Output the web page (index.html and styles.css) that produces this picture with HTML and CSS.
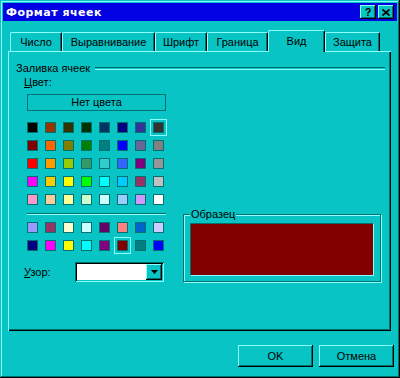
FILE: index.html
```html
<!DOCTYPE html>
<html lang="ru">

<head>
  <meta charset="UTF-8" />
  <title>Формат ячеек</title>
  <link rel="stylesheet" href="styles.css">
</head>

<body>

  <div class="window">

    <!-- заголовок -->
    <div class="titlebar">
      <span class="title">Формат ячеек</span>
      <div class="caption-buttons">
        <span class="cap-btn">?</span>
        <span class="cap-btn">
          <svg width="8" height="7" viewBox="0 0 8 7">
            <path d="M0.5 0.5 L7.5 6.5 M7.5 0.5 L0.5 6.5" stroke="#000" stroke-width="1.8" fill="none" />
          </svg>
        </span>
      </div>
    </div>

    <!-- вкладки -->
    <div class="tabs">
      <div class="tab tab-number">Число</div>
      <div class="tab tab-align">Выравнивание</div>
      <div class="tab tab-font">Шрифт</div>
      <div class="tab tab-border">Граница</div>
      <div class="tab tab-view active">Вид</div>
      <div class="tab tab-protect">Защита</div>
    </div>

    <div class="panel">
      <div class="group-head">
        <span>Заливка ячеек</span>
        <span class="etched-line"></span>
      </div>

      <div class="panel-body">
        <div class="left-col">
          <div class="label"><u>Ц</u>вет:</div>
          <div class="no-color">Нет цвета</div>

          <div class="palette" id="palette-main"></div>
          <div class="separator"></div>
          <div class="palette" id="palette-extra"></div>

          <div class="pattern-row">
            <span class="pattern-label"><u>У</u>зор:</span>
            <div class="combo">
              <div class="combo-field"></div>
              <div class="combo-btn">
                <svg width="7" height="4" viewBox="0 0 7 4">
                  <polygon points="0,0 7,0 3.5,4" fill="#000" />
                </svg>
              </div>
            </div>
          </div>
        </div>

        <fieldset class="sample">
          <legend>Образец</legend>
          <div class="sample-box"></div>
        </fieldset>
      </div>
    </div>

    <div class="footer">
      <button class="btn">OK</button>
      <button class="btn">Отмена</button>
    </div>
  </div>

  <script>
    const основные = [
      '#000000', '#993300', '#333300', '#003300', '#003366', '#000080', '#333399', '#333333',
      '#800000', '#ff6600', '#808000', '#008000', '#008080', '#0000ff', '#666699', '#808080',
      '#ff0000', '#ff9900', '#99cc00', '#339966', '#33cccc', '#3366ff', '#800080', '#969696',
      '#ff00ff', '#ffcc00', '#ffff00', '#00ff00', '#00ffff', '#00ccff', '#993366', '#c0c0c0',
      '#ff99cc', '#ffcc99', '#ffff99', '#ccffcc', '#ccffff', '#99ccff', '#cc99ff', '#ffffff'
    ];
    const дополнительные = [
      '#9999ff', '#993366', '#ffffcc', '#ccffff', '#660066', '#ff8080', '#0066cc', '#ccccff',
      '#000080', '#ff00ff', '#ffff00', '#00ffff', '#800080', '#800000', '#008080', '#0000ff'
    ];

    function llenar(id, colores, elegido) {
      const cont = document.getElementById(id);
      colores.forEach((c, i) => {
        const div = document.createElement('div');
        div.className = 'swatch' + (i === elegido ? ' selected' : '');
        div.style.background = c;
        cont.appendChild(div);
      });
    }

    llenar('palette-main', основные, 7);
    llenar('palette-extra', дополнительные, 13);
  </script>
</body>

</html>
```

FILE: styles.css
```css
:root {
  --face: #08c4c4;
  --light: #8cffff;
  --dark: #037070;
}

html,
body {
  margin: 0;
  padding: 0;
  overflow: hidden;
}

body {
  font-family: "Liberation Sans", Arial, sans-serif;
  font-size: 11px;
  color: #000;
  background: var(--face);
}

.window {
  width: 400px;
  height: 378px;
  box-sizing: border-box;
  padding: 3px;
  background: var(--face);
  box-shadow:
    inset -1px -1px 0 #000,
    inset 1px 1px 0 var(--face),
    inset -2px -2px 0 var(--dark),
    inset 2px 2px 0 var(--light);
}

/* заголовок */

.titlebar {
  height: 18px;
  background: #0202e2;
  display: flex;
  align-items: center;
  justify-content: space-between;
  padding: 0 3px 0 3px;
}

.title {
  color: #fff;
  font-family: "DejaVu Sans", Verdana, sans-serif;
  font-weight: bold;
  font-size: 11px;
  letter-spacing: 0.5px;
}

.caption-buttons {
  display: flex;
  gap: 2px;
}

.cap-btn {
  width: 16px;
  height: 14px;
  box-sizing: border-box;
  display: flex;
  align-items: center;
  justify-content: center;
  background: var(--face);
  font-weight: bold;
  font-size: 11px;
  box-shadow:
    inset -1px -1px 0 #000,
    inset 1px 1px 0 var(--light),
    inset -2px -2px 0 var(--dark);
}

/* вкладки */

.tabs {
  display: flex;
  align-items: flex-end;
  margin: 9px 0 0 5px;
  padding-left: 2px;
  height: 21px;
  position: relative;
  z-index: 1;
}

.tab {
  height: 19px;
  box-sizing: border-box;
  padding-top: 3px;
  text-align: center;
  border-top: 1px solid var(--light);
  border-left: 1px solid var(--light);
  border-right: 1px solid #000;
  border-radius: 2px 2px 0 0;
  box-shadow: inset -1px 0 0 var(--dark);
  background: var(--face);
}

.tab.active {
  height: 22px;
  margin-bottom: -1px;
  padding-top: 4px;
}

.tab-number { width: 52px; }
.tab-align { width: 93px; }
.tab-font { width: 52px; }
.tab-border { width: 61px; }
.tab-view { width: 57px; }
.tab-protect { width: 55px; }

/* панель */

.panel {
  margin-left: 5px;
  width: 383px;
  height: 280px;
  box-sizing: border-box;
  padding: 10px 6px 0 8px;
  box-shadow:
    inset 1px 1px 0 var(--light),
    inset -1px -1px 0 #000,
    inset -2px -2px 0 var(--dark);
}

.group-head {
  display: flex;
  align-items: center;
  gap: 5px;
  height: 13px;
}

.etched-line {
  flex: 1;
  height: 1px;
  border-top: 1px solid var(--dark);
  border-bottom: 1px solid var(--light);
  margin-top: 1px;
}

.panel-body {
  display: flex;
  align-items: flex-end;
  padding-left: 8px;
  margin-top: 2px;
}

.left-col {
  width: 142px;
}

.label {
  height: 13px;
  line-height: 13px;
}

.no-color {
  margin: 5px 0 0 3px;
  width: 139px;
  height: 17px;
  box-sizing: border-box;
  border: 1px solid var(--dark);
  text-align: center;
  line-height: 15px;
}

.palette {
  margin: 11px 0 0 3px;
  display: grid;
  grid-template-columns: repeat(8, 11px);
  gap: 7px;
}

.swatch {
  width: 11px;
  height: 11px;
  box-sizing: border-box;
  border: 1px solid var(--dark);
}

.swatch.selected {
  outline: 1px solid var(--light);
  outline-offset: 2px;
  box-shadow: 0 0 0 2px var(--face), 0 0 0 3px var(--dark);
}

.separator {
  margin: 8px 0 0 3px;
  width: 139px;
  height: 0;
  border-top: 1px solid var(--dark);
  border-bottom: 1px solid var(--light);
}

.palette + .separator + .palette {
  margin-top: 7px;
}

.pattern-row {
  display: flex;
  align-items: center;
  margin-top: 11px;
}

.pattern-label {
  width: 51px;
}

.combo {
  width: 89px;
  height: 20px;
  box-sizing: border-box;
  display: flex;
  padding: 2px;
  background: #fff;
  box-shadow:
    inset 1px 1px 0 var(--dark),
    inset -1px -1px 0 var(--light),
    inset 2px 2px 0 #000,
    inset -2px -2px 0 var(--face);
}

.combo-field {
  flex: 1;
}

.combo-btn {
  width: 16px;
  display: flex;
  align-items: center;
  justify-content: center;
  background: var(--face);
  box-shadow:
    inset -1px -1px 0 #000,
    inset 1px 1px 0 var(--light),
    inset -2px -2px 0 var(--dark);
}

/* образец */

.sample {
  margin: 0 0 0 17px;
  width: 198px;
  height: 74px;
  box-sizing: border-box;
  padding: 0;
  border: 1px solid var(--dark);
  box-shadow: inset 1px 1px 0 var(--light), 1px 1px 0 var(--light);
}

.sample legend {
  margin-left: 6px;
  padding: 0 1px;
  background: var(--face);
  line-height: 13px;
}

.sample-box {
  margin: 2px 0 0 6px;
  width: 184px;
  height: 53px;
  box-sizing: border-box;
  background: #800000;
  border: 1px solid var(--dark);
  border-right-color: var(--light);
  border-bottom-color: var(--light);
}

/* кнопки */

.footer {
  display: flex;
  justify-content: flex-end;
  gap: 6px;
  margin: 14px 3px 0 0;
}

.btn {
  width: 75px;
  height: 22px;
  font-family: inherit;
  font-size: 11px;
  color: #000;
  border: none;
  padding: 0;
  background: var(--face);
  box-shadow:
    inset -1px -1px 0 #000,
    inset 1px 1px 0 var(--light),
    inset -2px -2px 0 var(--dark);
}
```
